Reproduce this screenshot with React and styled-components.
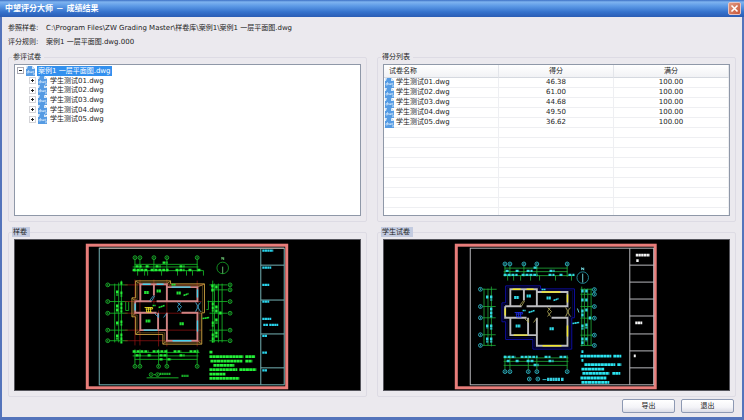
import React, { useState } from 'react';
import styled, { createGlobalStyle } from 'styled-components';

const GlobalStyle = createGlobalStyle`
  * { box-sizing: border-box; }
  body {
    margin: 0;
    background: #ebe9ee;
    color: #1c1c1c;
    font-family: "DejaVu Sans", "Noto Sans CJK SC", sans-serif;
    font-size: 7px;
    line-height: 10px;
  }
  button {
    font: inherit;
    color: inherit;
    padding: 0;
    cursor: pointer;
  }
`;

const Window = styled.div`
  display: flex;
  flex-direction: column;
  min-height: 100vh;
  background: #ebe9ee;
  border: solid #5474bb;
  border-width: 0 2px 3px;
`;

const TitleBar = styled.header`
  display: flex;
  align-items: center;
  justify-content: space-between;
  height: 17px;
  margin: 0 -2px;
  padding: 0 3px 0 5px;
  background: linear-gradient(#3c6fc4 0, #7fb4f0 2px, #5d9ae6 6px, #3572cc 12px, #2a5cb4 17px);
  color: #fff;
`;

const Title = styled.h1`
  margin: 0;
  font-size: 8px;
  font-weight: bold;
  line-height: 17px;
`;

const CloseButton = styled.button`
  display: flex;
  align-items: center;
  justify-content: center;
  width: 13px;
  height: 13px;
  background: linear-gradient(135deg, #e09a82, #c8573a);
  border: 1px solid #e6c4c4;
  border-radius: 2px;
`;

const Body = styled.main`
  flex: 1;
  display: flex;
  flex-direction: column;
  padding: 4px 6px;
`;

const Info = styled.dl`
  display: grid;
  grid-template-columns: 38px 1fr;
  margin: 0 0 3px;
  line-height: 14px;

  dd { margin: 0; }
`;

const Panels = styled.div`
  flex: 1;
  display: grid;
  grid-template-columns: 1fr 1fr;
  grid-template-rows: 1fr 1fr;
  gap: 5px 10px;
`;

const Group = styled.fieldset`
  display: flex;
  flex-direction: column;
  min-width: 0;
  margin: 0;
  padding: 2px 3px 5px;
  border: 1px solid #dddbe4;
  border-radius: 2px;
`;

const Legend = styled.legend`
  height: 10px;
  padding: 0 3px 0 1px;
  background: ${({ $marked }) => ($marked ? '#c3cbe0' : '#ebe9ee')};
`;

const Box = styled.div`
  flex: 1 0 0;
  min-height: 80px;
  margin: 0 2px;
  overflow: hidden;
  background: ${({ $dark }) => ($dark ? '#000' : '#fff')};
  border: 1px solid ${({ $dark }) => ($dark ? '#55555c' : '#8f98a8')};

  svg { display: block; width: 100%; height: 100%; }
`;

const Tree = styled.ul`
  display: grid;
  grid-auto-rows: minmax(0, 1fr);
  height: ${({ $open }) => ($open ? '58px' : '10px')};
  margin: 1px 0 0;
  padding: 0;
  list-style: none;
`;

const TreeItem = styled.li`
  display: flex;
  align-items: center;
  gap: 2px;
  padding-left: ${({ $level }) => 2 + $level * 12}px;
`;

const Expander = styled.button`
  display: flex;
  width: 7px;
  height: 7px;
  background: none;
  border: none;

  svg { width: 7px; height: 7px; }
`;

const TreeLabel = styled.span`
  height: 10px;
  padding: 0 1px;
  background: ${({ $selected }) => ($selected ? '#3390ee' : 'transparent')};
  color: ${({ $selected }) => ($selected ? '#fff' : 'inherit')};
`;

const FileIcon = styled.svg`
  && {
    flex: none;
    width: 9px;
    height: 10px;
  }
`;

const ScoreTable = styled.table`
  width: 100%;
  table-layout: fixed;
  border-collapse: separate;
  border-spacing: 0;
  text-align: center;

  th {
    height: 13px;
    padding: 0 5px;
    font-weight: normal;
    background: linear-gradient(#fff, #f1f2f5);
    border-right: 1px solid #e3e5ea;
    border-bottom: 1px solid #d5d9e0;
  }
  td {
    height: 10px;
    padding: 0 1px;
    line-height: 9px;
    border-right: 1px solid #eeeff2;
    border-bottom: 1px solid #eeeff2;
  }
  th:first-child, td:first-child { text-align: left; }
`;

const FileName = styled.span`
  display: flex;
  align-items: center;
  gap: 2px;
  height: 9px;
`;

const Footer = styled.footer`
  display: flex;
  justify-content: flex-end;
  gap: 6px;
  padding: 2px 2px 0;
`;

const ActionButton = styled.button`
  width: 53px;
  height: 14px;
  background: linear-gradient(#fff, #f4f4f8 60%, #dcdde6);
  border: 1px solid #8d99b3;
  border-radius: 2px;
`;

const files = [
  { name: '学生测试01.dwg', score: '46.38' },
  { name: '学生测试02.dwg', score: '61.00' },
  { name: '学生测试03.dwg', score: '44.68' },
  { name: '学生测试04.dwg', score: '49.50' },
  { name: '学生测试05.dwg', score: '36.62' },
];
const emptyRows = [0, 1, 2, 3, 4, 5, 6, 7, 8];

const DwgIcon = () => (
  <FileIcon viewBox="0 0 9 10">
    <path d="M0 0h6l3 3v7H0z" fill="#559be3" />
    <path d="M0 0h2L1 3H0zM6 0l3 3H6z" fill="#d6e8fa" />
    <path d="M2.500 4v3H1V5.500h1.500M3.500 5l.5 2 1-1.500.7 1.500.5-2M8.300 5.300H7V7h1.300v1.700H7" fill="none" stroke="#dcecfc" strokeWidth=".6" />
  </FileIcon>
);

const ExpandIcon = ({ open, light }) => (
  <svg viewBox="0 0 7 7">
    <rect x=".5" y=".5" width="6" height="6" fill="#fff" stroke={light ? '#a9a9b4' : '#d4d4d8'} />
    <path d={open ? 'M2 3.5h3' : 'M2 3.5h3M3.500 2v3'} stroke="#222" />
  </svg>
);

const Bubbles = ({ points, color }) => points.map(([x, y]) => (
  <g key={`${x}-${y}`}>
    <circle cx={x} cy={y} r="1.9" fill="none" stroke={color} strokeWidth=".8" />
    <path d={`M${x} ${y - 1}v2`} stroke={color} strokeWidth=".8" />
  </g>
));

// the house plan, shared by both drawings
const House = ({ outline, wall, glass, label, stair, door, axis, corners }) => (
  <g fill="none">
    {axis && (
      <path d="M125 284.300H204M125 301H202M125 312.700H202M125 329.700H202M125 340.300H202M135.300 279V345M140.300 279V345M154.300 279V303M159 310V346M167.300 279V346M197.700 280V346" stroke={axis} strokeWidth=".7" />
    )}
    <path d="M136 280.300H171V283.300H205V312.300H202.300V343.700H163.300V334H136V316.300H132.300V297.300H136Z" stroke={outline} />
    <path d="M137.500 282H169.500V285H203V311H200.500V342H165V332.300H137.500V314.500H134V299H137.500Z" stroke={outline} strokeWidth=".4" />
    {corners && (
      <path d="M136 280.300l4.700 3.400M171 280.300l-4 3.400M205 283.300l-7 3.200M202.300 343.700l-4.300-3.400M163.300 343.700l4-3.400M136 334l4.700-4.300M132.300 297.300l3.500 3.400M132.300 316.300l3.500-4" stroke={outline} strokeWidth=".7" />
    )}
    <path d="M140.700 300.700V283.700H167.300V300.700M167.300 286.500H198V340.300H167.300V312.300M140.700 312.300V329.700H167.300M158.500 312.300V329.700M135.500 300.700V312.300H157M135.500 300.700H152M157 300.700H198M182 312.300H198M154.300 283.700V295" stroke={wall} strokeWidth="1.900" />
    {/* passage between the two blocks */}
    <path d="M198 301.700V311.300" stroke="#000" strokeWidth="2.200" />
    <path d="M143 283.700h8M157 283.700h7M172 286.500h19M144 329.700h14M173 340.300h19M198 289v8M198 320v11M135.500 303v7" stroke={glass} strokeWidth="1.400" />
    <path d="M154 295l-4 5M152 300.500l3-5M155 313l4 4v-4M164 317l3-4M178 302l4 4-4 5M181 302l-3 4 3 5M196 302l3 4-3 5M201 302l-3 4 3 5" stroke={door} strokeWidth=".8" />
    <path d="M145 307h8v1.500h-7M147 308v3.500M149 307v4.500M151 307v4.500M147 311.500h5" stroke={stair} strokeWidth=".9" />
    <g stroke={label} strokeWidth="3" strokeDasharray="2 .3">
      <path d="M144.500 292h5M157 290.500h4.500M146 320.500h5M177 292.500h4.500M180 323.300h4.500" />
      <path d="M153 305h3M159 307l6-2M184 295l5-2M172 284h4M203 318l7-1" strokeWidth="1.600" />
    </g>
  </g>
);

const SampleDrawing = () => (
  <svg viewBox="15 240 346 149">
    <g fill="none">
      <rect x="87.500" y="244.500" width="200" height="143" stroke="#e87d7a" strokeWidth="3" />
      <rect x="99.500" y="247.500" width="185.500" height="137" stroke="#74b3b5" />
      <path d="M99.500 247.500H285" stroke="#c9aaa4" />
      <path d="M261.500 247.500V384.500M261.500 264.500H285M261.500 299.500H285M261.500 333.500H285M261.500 367.500H285" stroke="#74b3b5" />
      <path d="M263 250h11M263 267h9M263 284.300h7M263 301h7M263 318.300h9M264 324.500h5M270 324.500h9M263 335.500h5M263 352.300h5M263 370h5" stroke="#29d4ec" strokeWidth="2.200" strokeDasharray="2.200 .3" />
      <g stroke="#16c22a" strokeWidth=".8">
        <path d="M135.300 259v12M140.300 259v12M154.300 259v12M167.300 259v12M197.700 259v12M135 263.700h63M133 266.300h66M133 270h71" />
        <path d="M135.300 349v15M140.300 349v15M159 349v15M167.300 349v15M197.700 349v15M133 352h67M133 355.500h66M135 359h63" />
        <path d="M110 284.300h18M110 301h18M110 312.700h18M110 329.700h18M110 340.300h18M115 283v59M119 282v60M121.700 280v62" />
        <path d="M210 284.300h18M213 289.300h15M208 301h20M210 312.700h18M210 329.700h18M210 340.300h18M213.300 280v62M215 283v59M219 283v59M222.700 283v59" />
        <path d="M126 301v9h3v-9M209 300v9h-2M138 270v5M145 270v5M148 270v5M162 270v5M178 270v5M187 270v5M193 270v5M204 270v5" />
      </g>
      <g stroke="#24f038" strokeWidth="2.400" strokeDasharray="3 .9">
        <path d="M136 265.700h6M146 265.700h4M156 265.700h5M180 265.700h5M133 269.300h15M151 269.300h18M176 269.300h9M189 269.300h4M198 269.300h4M163 262h5" />
        <path d="M133 351h16M153 351h15M174 351h8M190 351h9M136 355h5M148 355h4M160 355h8M180 355h5M160 359h3M168 359h4" />
        <path d="M117.500 290v5M117.500 304v8M117.500 321v4M117.500 334v5M213 284v7M217 285v4M217 305v7M217 318v5M217 331v6M221 311v3" />
        <path d="M121.700 281v3M121.700 291v5M121.700 302v10M121.700 320v5M121.700 333v10M213.300 302v9M213.300 321v5M213.300 333v9" strokeWidth="2" />
      </g>
      <Bubbles color="#1fce34" points={[
        [135.3, 257], [140.3, 257], [154.3, 257], [167.3, 257], [197.7, 257],
        [135.3, 366], [140.3, 366], [159, 366], [167.3, 366], [197.7, 366],
        [108, 284.3], [108, 301], [108, 312.7], [108, 329.7], [108, 340.3],
        [230.7, 284.3], [230.7, 289.3], [230.7, 301], [230.7, 312.7], [230.7, 329.7], [230.7, 340.3],
      ]} />
      <circle cx="223.300" cy="267.300" r="5.800" stroke="#149a24" strokeWidth=".9" />
      <path d="M223.300 273v-7M222.500 259v-2.500l1.800 2.500v-2.500" stroke="#7adf84" strokeWidth=".8" />
      <path d="M210 351.700h3M210 356.300h34M246 356.300h10M211 360.700h32M246 360.700h7M214 365h21M210 369.300h28M240 369.300h17M210 373.700h16M210 378h30" stroke="#24f038" strokeWidth="2.800" strokeDasharray="3 .3" />
      <path d="M160 373.500h11M182 375.500h7" stroke="#1bbf2c" strokeWidth="2.400" strokeDasharray="1.400 .5" />
      <path d="M154 374.300h2M147 377.500h32" stroke="#1bbf2c" strokeWidth=".9" />
    </g>
    <Bubbles color="#1bbf2c" points={[[151.5, 374.3], [158, 374.3]]} />
    <House corners outline="#c0983c" wall="#cf8484" glass="#43d3ec" label="#22e035" stair="#f0e428" door="#3fb3e0" axis="#981414" />
  </svg>
);

const StudentDrawing = () => (
  <svg viewBox="384 240 346 149">
    <g fill="none">
      <rect x="456.500" y="244.500" width="199.500" height="143" stroke="#e87d7a" strokeWidth="3" />
      <rect x="470.500" y="247.500" width="184" height="137" stroke="#b9b9bd" />
      <path d="M630.500 247.500V384.500M630.500 264.500H655M630.500 281.500H655M630.500 298.500H655M630.500 315.500H655M630.500 333.500H655M630.500 350.500H655M630.500 367.500H655" stroke="#b9b9bd" />
      <path d="M636.500 254.500h14M637 260h2.500M636 322.300h7M634.500 355.500h2" stroke="#f4f4f4" strokeWidth="2.800" strokeDasharray="2.400 .3" />
      <g stroke="#1fae3a" strokeWidth=".8">
        <path d="M505.300 265v11M510.300 265v11M524.300 265v11M537.300 265v11M567.700 265v11M505 267.500h63M504 271h64M504 275h71" />
        <path d="M505.300 355v14M510.300 355v14M528.700 355v14M537.300 355v14M567.700 355v14M504 357.500h65M504 361h65M504 365h64" />
        <path d="M483 288.700h14M483 306h13M483 317.300h13M483 334.300h13M483 345h13M484.300 288v57M488.300 288v57M491.700 286v60" />
        <path d="M581 288.700h12M581 293.700h12M581 306h12M581 317.700h12M581 334.700h12M581 345h12M582.300 286v60M585 288v57M588.300 288v57M591.700 288v57" />
        <path d="M508 275v5M514 275v5M521 275v5M531 275v5M540 275v5M556 275v5M572 275v5" />
      </g>
      <g stroke="#32d8df" strokeWidth="2.400" strokeDasharray="3 .9">
        <path d="M504 274.300h14M522 274.300h16M549 274.300h6M560 274.300h3M569 274.300h6M506 270.300h4M516 270.300h4M527 270.300h6M550 270.300h5M534 267h4" />
        <path d="M504 356.500h12M521 356.500h17M545 356.500h6M560 356.500h8M507 360.700h3M516 360.700h4M527 360.700h7M549 360.700h5M534 364.700h5" />
        <path d="M487.500 295v4M487.500 324v4M487.500 337v5M491.500 295v5M491.500 307v10M491.500 324v5M491.500 337v5M583 289v4M587 289v3M583 298v4M583 309v8M583 324v5M583 337v8M587 298v4M587 308v3M587 323v5M587 337v4M590.500 316v3" />
      </g>
      <Bubbles color="#35cfe0" points={[
        [505.3, 263.3], [510.3, 263.3], [524.3, 263.3], [537.3, 263.3], [567.7, 263.3],
        [505.3, 371.3], [510.3, 371.3], [528.7, 371.3], [537.3, 371.3], [567.7, 371.3],
        [480.7, 288.7], [480.7, 306], [480.7, 317.3], [480.7, 334.3], [480.7, 345],
        [595, 289], [595, 293.7], [595, 306], [595, 317.7], [595, 334.7], [595, 345],
        [529.7, 378.7], [538.3, 378.7],
      ]} />
      <circle cx="583.300" cy="277" r="5.800" stroke="#2590a0" strokeWidth=".9" />
      <path d="M583.300 282v-9M582.300 269.500v-2.500l2 2.500v-2.500M578 308l1.500 4" stroke="#7cecf2" strokeWidth=".9" />
      <path d="M582 351.300h2M581 355.700h31M614 355.700h8M582 360h2M585 364.300h31M618 364.300h4M582 368.700h23M583 373h27M613 373h8M581 377.700h26M582 382h28" stroke="#2be3f0" strokeWidth="2.800" strokeDasharray="3 .3" />
      <path d="M543 379.300h4" stroke="#35cfe0" strokeWidth=".9" />
      <path d="M547.500 379h13M561.500 379h3" stroke="#35cfe0" strokeWidth="3.200" strokeDasharray="2.300 .4" />
    </g>
    <g transform="translate(370 5)">
      <House outline="#0d0da0" wall="#bcbcc0" glass="#f0e62a" label="#2fd9e6" stair="#1c2be0" door="#b5ad5a" />
    </g>
  </svg>
);

const App = () => {
  const [open, setOpen] = useState(true);

  return (
    <>
      <GlobalStyle />
      <Window>
        <TitleBar>
          <Title>中望评分大师 － 成绩结果</Title>
          <CloseButton aria-label="关闭">
            <svg width="9" height="9" viewBox="0 0 9 9">
              <path d="M1.500 1.500l6 6M7.500 1.500l-6 6" stroke="#fff" strokeWidth="1.600" />
            </svg>
          </CloseButton>
        </TitleBar>

        <Body>
          <Info>
            <dt>参照样卷:</dt>
            <dd>C:\Program Files\ZW Grading Master\样卷库\案例1\案例1 一层平面图.dwg</dd>
            <dt>评分规则:</dt>
            <dd>案例1 一层平面图.dwg.000</dd>
          </Info>

          <Panels>
            <Group>
              <Legend>参评试卷</Legend>
              <Box>
                <Tree $open={open}>
                  <TreeItem $level={0}>
                    <Expander aria-label="展开" onClick={() => setOpen(!open)}>
                      <ExpandIcon open={open} light />
                    </Expander>
                    <DwgIcon />
                    <TreeLabel $selected>案例1 一层平面图.dwg</TreeLabel>
                  </TreeItem>
                  {open && files.map((file) => (
                    <TreeItem key={file.name} $level={1}>
                      <Expander aria-label="展开"><ExpandIcon /></Expander>
                      <DwgIcon />
                      <TreeLabel>{file.name}</TreeLabel>
                    </TreeItem>
                  ))}
                </Tree>
              </Box>
            </Group>

            <Group>
              <Legend>得分列表</Legend>
              <Box>
                <ScoreTable>
                  <thead>
                    <tr><th>试卷名称</th><th>得分</th><th>满分</th></tr>
                  </thead>
                  <tbody>
                    {files.map((file) => (
                      <tr key={file.name}>
                        <td><FileName><DwgIcon />{file.name}</FileName></td>
                        <td>{file.score}</td>
                        <td>100.00</td>
                      </tr>
                    ))}
                    {emptyRows.map((row) => (
                      <tr key={row}><td /><td /><td /></tr>
                    ))}
                  </tbody>
                </ScoreTable>
              </Box>
            </Group>

            <Group>
              <Legend $marked>样卷</Legend>
              <Box $dark><SampleDrawing /></Box>
            </Group>

            <Group>
              <Legend $marked>学生试卷</Legend>
              <Box $dark><StudentDrawing /></Box>
            </Group>
          </Panels>

          <Footer>
            <ActionButton>导出</ActionButton>
            <ActionButton>退出</ActionButton>
          </Footer>
        </Body>
      </Window>
    </>
  );
};

export default App;
